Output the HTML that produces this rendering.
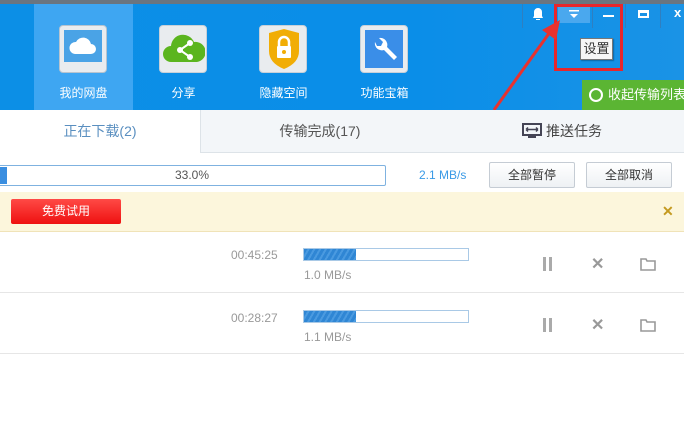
<!DOCTYPE html>
<html><head><meta charset="utf-8"><style>
*{margin:0;padding:0;box-sizing:border-box}
body{width:684px;height:422px;overflow:hidden;background:#fff;font-family:"Liberation Sans","Noto Sans CJK SC",sans-serif;position:relative}
.a{position:absolute}
.hdr{left:0;top:0;width:684px;height:110px;background:linear-gradient(90deg,#0c8fe6,#0a8ee8 60%,#1a93e6)}
.top{left:0;top:0;width:684px;height:4px;background:#6a7580}
.nav{top:4px;width:99px;height:106px;color:#fff;font-size:12px;text-align:center}
.nav span{position:absolute;left:0;right:0;top:80px}
.ic{position:absolute;left:25px;top:21px;width:48px;height:48px;border-radius:4px;background:#e9ecef;border:1px solid #c8d0d8}
.sep{top:4px;width:1px;height:24px;background:#2f7fc0}
.tab{top:110px;height:43px;font-size:14px;text-align:center;line-height:43px}
.btn{top:162px;height:26px;border:1px solid #c5ccd4;background:linear-gradient(#fff,#eef1f4);border-radius:2px;font-size:12px;text-align:center;line-height:24px;color:#333}
.pb{width:166px;height:13px;border:1px solid #a9c9e6;background:#fff}
.pb i{display:block;width:52px;height:11px;background:repeating-linear-gradient(120deg,#2f86d4 0 3px,#4a9ae0 3px 5px)}
.t{font-size:12px;color:#999}
.ico{font-size:16px;color:#999;font-weight:bold}
</style></head><body>
<div class="a hdr"></div>
<div class="a top"></div>
<div class="a nav" style="left:34px;background:#3ea6f2"><div class="ic" style="border-color:#b8c4cf"><div style="position:absolute;left:4px;top:4px;width:38px;height:32px;background:#4aa3e6"></div><svg style="position:absolute;left:9px;top:10px" width="28" height="20"><path d="M6 18 a6 6 0 0 1 1-12 a8 8 0 0 1 15 2 a5 5 0 0 1 0 10z" fill="#fff"/></svg></div><span>我的网盘</span></div>
<div class="a nav" style="left:134px"><div class="ic"><svg style="position:absolute;left:3px;top:6px" width="42" height="34"><path d="M8 30 a8 8 0 0 1 0-16 a12 12 0 0 1 23-4 a9 9 0 0 1 3 20z" fill="#5bb51e"/><circle cx="27" cy="11" r="3" fill="#fff"/><circle cx="17" cy="18" r="3" fill="#fff"/><circle cx="27" cy="25" r="3" fill="#fff"/><path d="M27 11L17 18L27 25" stroke="#fff" stroke-width="2" fill="none"/></svg></div><span>分享</span></div>
<div class="a nav" style="left:234px"><div class="ic"><svg style="position:absolute;left:7px;top:3px" width="34" height="40"><path d="M2 4 L17 0 L32 4 L32 22 Q32 34 17 40 Q2 34 2 22Z" fill="#f1ad05"/><rect x="10" y="17" width="14" height="12" rx="1" fill="#fff"/><path d="M12 17 v-4 a5 5 0 0 1 10 0 v4" stroke="#fff" stroke-width="2.5" fill="none"/><circle cx="17" cy="23" r="2" fill="#f1ad05"/></svg></div><span>隐藏空间</span></div>
<div class="a nav" style="left:335px"><div class="ic"><div style="position:absolute;left:4px;top:4px;width:38px;height:38px;background:#3a8ee8"></div><svg style="position:absolute;left:10px;top:10px" width="28" height="28"><path d="M4 6 a7 7 0 0 0 9 8 l10 10 l3-3 l-10-10 a7 7 0 0 0-8-9 l4 4 l-2 4 l-4 0z" fill="#fff"/></svg></div><span>功能宝箱</span></div>
<div class="a sep" style="left:522px"></div><div class="a sep" style="left:592px"></div><div class="a sep" style="left:625px"></div><div class="a sep" style="left:660px"></div>
<svg class="a" style="left:532px;top:7px" width="12" height="14"><path d="M6 1 a4 4 0 0 1 4 4 v4 l1 2 h-10 l1-2 v-4 a4 4 0 0 1 4-4z M4 12 h4 v1 h-4z" fill="#fff"/></svg>
<div class="a" style="left:558px;top:5px;width:32px;height:18px;background:#4aa8ee"></div>
<svg class="a" style="left:568px;top:10px" width="12" height="10"><rect x="1" y="0" width="10" height="1.5" fill="#fff"/><path d="M2 4 L10 4 L6 8z" fill="#fff"/></svg>
<div class="a" style="left:603px;top:15px;width:11px;height:2px;background:#fff"></div>
<div class="a" style="left:638px;top:10px;width:11px;height:8px;border:2px solid #fff;border-top-width:3px"></div>
<div class="a" style="left:674px;top:5px;color:#fff;font-size:13px;font-weight:bold">x</div>
<div class="a" style="left:554px;top:4px;width:69px;height:67px;border:3px solid #e8262b"></div>
<div class="a" style="left:580px;top:38px;width:33px;height:22px;background:#f6f6f6;border:1px solid #777;font-size:13px;line-height:20px;text-align:center;color:#333;box-shadow:1px 1px 1px rgba(0,0,0,.3)">设置</div>
<svg class="a" style="left:480px;top:10px" width="90" height="110"><path d="M14 100 L70 22" stroke="#e8322f" stroke-width="3"/><path d="M80 10 L62 20 L76 30z" fill="#e8322f"/></svg>
<div class="a" style="left:582px;top:80px;width:102px;height:30px;background:#5bb533;color:#fff;font-size:13px;line-height:30px;padding-left:26px;white-space:nowrap;overflow:hidden">收起传输列表</div>
<div class="a" style="left:589px;top:88px;width:14px;height:14px;border:2px solid #fff;border-radius:50%"></div>
<div class="a tab" style="left:0;width:200px;color:#5a8fc0;background:#fff">正在下载(2)</div>
<div class="a tab" style="left:200px;width:484px;background:#f3f6f9;border-left:1px solid #dde3e8;border-bottom:1px solid #dde3e8"></div>
<div class="a tab" style="left:200px;width:240px;color:#555">传输完成(17)</div>
<div class="a tab" style="left:440px;width:244px;color:#444"><svg style="vertical-align:-3px;margin-right:4px" width="20" height="16"><rect x="1" y="1" width="18" height="11" fill="none" stroke="#445" stroke-width="2"/><rect x="6" y="13" width="8" height="2" fill="#445"/><path d="M4 6.5h12M4 6.5l2-2M4 6.5l2 2M16 6.5l-2-2M16 6.5l-2 2" stroke="#445" stroke-width="1.5"/></svg>推送任务</div>
<div class="a" style="left:-2px;top:165px;width:388px;height:21px;border:1px solid #7fb2e0;border-radius:2px;font-size:12px;color:#555;text-align:center;line-height:19px">33.0%<div style="position:absolute;left:0;top:1px;width:8px;height:17px;background:#3a8ee0"></div></div>
<div class="a" style="left:419px;top:168px;font-size:12px;color:#3a9ae6">2.1 MB/s</div>
<div class="a btn" style="left:489px;width:86px">全部暂停</div>
<div class="a btn" style="left:586px;width:86px">全部取消</div>
<div class="a" style="left:0;top:192px;width:684px;height:40px;background:#fcf6dc;border-bottom:1px solid #f0e3b8"></div>
<div class="a" style="left:11px;top:199px;width:110px;height:25px;background:linear-gradient(#ff4a46,#ee1010);border-radius:2px;color:#fff;font-size:12px;text-align:center;line-height:25px">免费试用</div>
<div class="a" style="left:662px;top:203px;color:#c49a20;font-size:14px;font-weight:bold">✕</div>
<div class="a t" style="left:231px;top:248px">00:45:25</div>
<div class="a pb" style="left:303px;top:248px"><i></i></div>
<div class="a t" style="left:304px;top:268px">1.0 MB/s</div>
<div class="a" style="left:0;top:292px;width:684px;height:1px;background:#e6e6e6"></div>
<div class="a t" style="left:231px;top:311px">00:28:27</div>
<div class="a pb" style="left:303px;top:310px"><i></i></div>
<div class="a t" style="left:304px;top:330px">1.1 MB/s</div>
<div class="a" style="left:0;top:353px;width:684px;height:1px;background:#e6e6e6"></div>
<div class="a" style="left:543px;top:257px;width:3px;height:14px;background:#aaa;box-shadow:6px 0 #aaa"></div>
<div class="a" style="left:543px;top:318px;width:3px;height:14px;background:#aaa;box-shadow:6px 0 #aaa"></div>
<div class="a ico" style="left:591px;top:254px">✕</div>
<div class="a ico" style="left:591px;top:315px">✕</div>
<svg class="a" style="left:640px;top:257px" width="16" height="14"><path d="M1 2h5l1 2h8v9H1z" fill="none" stroke="#999" stroke-width="1.6"/></svg>
<svg class="a" style="left:640px;top:318px" width="16" height="14"><path d="M1 2h5l1 2h8v9H1z" fill="none" stroke="#999" stroke-width="1.6"/></svg>
</body></html>
